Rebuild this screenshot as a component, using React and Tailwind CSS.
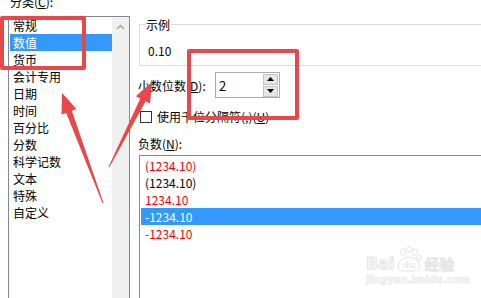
import React from "react";

const categories = ["常规", "数值", "货币", "会计专用", "日期", "时间", "百分比", "分数", "科学记数", "文本", "特殊", "自定义"];

const negatives = [
  { t: "(1234.10)", c: "text-[#ff0000]" },
  { t: "(1234.10)", c: "text-black" },
  { t: "1234.10", c: "text-[#ff0000]" },
  { t: "-1234.10", c: "text-white bg-[#3399ff]" },
  { t: "-1234.10", c: "text-[#ff0000]" },
];

export default function App() {
  return (
    <div className="relative w-[481px] h-[298px] overflow-hidden bg-white text-[12px] text-black font-['Noto_Sans_CJK_SC','Microsoft_YaHei',sans-serif]">
      <div className="flex h-full">
        {/* left column */}
        <div className="ml-[8px] w-[122px] shrink-0 flex flex-col">
          <div className="-mt-[6px] mb-[6px] h-[16px] leading-[16px] pl-[2px] whitespace-nowrap">
            分类(<span className="underline">C</span>):
          </div>
          <div className="flex flex-1 border-t border-l border-r border-[#828790]">
            <div className="flex-1 pl-[1px]">
              {categories.map((c, i) => (
                <div
                  key={c}
                  className={
                    "h-[17px] leading-[17px] pl-[3px] whitespace-nowrap " +
                    (i === 1 ? "bg-[#3399ff] text-white" : "")
                  }
                >
                  {c}
                </div>
              ))}
            </div>
            <div className="w-[17px] bg-[#f0f0f0] flex justify-center pt-[7px]">
              <svg width="9" height="6" viewBox="0 0 9 6">
                <path d="M1 5 L4.5 1.5 L8 5" fill="none" stroke="#a6a6a6" strokeWidth="1.5" />
              </svg>
            </div>
          </div>
        </div>

        {/* right column */}
        <div className="ml-[9px] flex-1 flex flex-col">
          <div className="relative mt-[24px] h-[42px] border-t border-l border-b border-[#dcdcdc] pl-[8px] pt-[17px]">
            <span className="absolute -top-[9px] left-[5px] bg-white px-[1px] h-[17px] leading-[17px]">示例</span>
            <div className="h-[17px] leading-[17px]">0.10</div>
          </div>

          <div className="mt-[6px] flex items-center h-[26px]">
            <div className="w-[77px] -ml-[1px] whitespace-nowrap leading-[17px]">
              小数位数(<span className="underline">D</span>):
            </div>
            <div className="w-[65px] h-[26px] border border-[#acacac] flex items-center justify-between">
              <span className="pl-[3px] leading-[17px] text-[13px]">2</span>
              <div className="flex flex-col gap-[1px] mr-[1px]">
                <div className="w-[15px] h-[11px] bg-[#e6e6e6] border border-[#c2c2c2] flex items-center justify-center">
                  <svg width="7" height="4" viewBox="0 0 7 4"><path d="M0 4 L3.5 0 L7 4 Z" fill="#000" /></svg>
                </div>
                <div className="w-[15px] h-[11px] bg-[#e6e6e6] border border-[#c2c2c2] flex items-center justify-center">
                  <svg width="7" height="4" viewBox="0 0 7 4"><path d="M0 0 L7 0 L3.5 4 Z" fill="#000" /></svg>
                </div>
              </div>
            </div>
          </div>

          <div className="mt-[13px] flex items-center h-[12px]">
            <div className="ml-[1px] w-[12px] h-[12px] border border-[#333333] bg-white" />
            <span className="ml-[5px] leading-[12px] whitespace-nowrap">
              使用千位分隔符(,)(<span className="underline">U</span>)
            </span>
          </div>

          <div className="mt-[12px] h-[17px] leading-[17px] -ml-[1px] whitespace-nowrap">
            负数(<span className="underline">N</span>):
          </div>

          <div className="mt-[3px] flex-1 border-t border-l border-[#828790] pl-[1px] pt-[1px]">
            {negatives.map((n, i) => (
              <div key={i} className={"h-[17px] leading-[17px] pl-[4px] " + n.c}>
                {n.t}
              </div>
            ))}
          </div>
        </div>
      </div>

      {/* annotations */}
      <div className="absolute left-0 top-[16px] w-[86px] h-[54px] border-[4px] border-[#e8484a] rounded-[2px]" />
      <div className="absolute left-[187px] top-[49px] w-[112px] h-[71px] border-[4px] border-[#e8484a] rounded-[2px]" />
      <svg className="absolute left-0 top-0 pointer-events-none" width="481" height="298" viewBox="0 0 481 298">
        <polygon
          points="62,93 76.5,109 71.8,110.7 103.5,203 102.5,203.2 66.2,112.9 61.5,114.6"
          fill="#e8484a"
        />
        <polygon
          points="152,82 150.1,103.4 145.7,101.2 109.4,167.2 108.6,166.8 140.3,98.4 135.9,96.2"
          fill="#e8484a"
        />
      </svg>

      {/* watermark */}
      <div className="absolute left-[366px] top-[246px] flex flex-col items-start opacity-90">
        <div className="flex items-end h-[26px]">
          <span className="text-[16px] leading-[16px] font-bold text-[#fafafa] font-['DejaVu_Sans',sans-serif] [-webkit-text-stroke:1px_#e2e2e2]">Bai</span>
          <svg width="28" height="26" viewBox="0 0 28 26" className="mx-[1px]">
            <ellipse cx="8" cy="6" rx="2.5" ry="3.2" fill="none" stroke="#e2e2e2" strokeWidth="1" />
            <ellipse cx="14" cy="3.5" rx="2.5" ry="3" fill="none" stroke="#e2e2e2" strokeWidth="1" />
            <ellipse cx="20" cy="6" rx="2.5" ry="3.2" fill="none" stroke="#e2e2e2" strokeWidth="1" />
            <ellipse cx="24" cy="12" rx="2.2" ry="2.8" fill="none" stroke="#e2e2e2" strokeWidth="1" />
            <path d="M3 22 Q3 12 14 11 Q25 12 25 22 Q25 25 14 25 Q3 25 3 22 Z" fill="none" stroke="#e2e2e2" strokeWidth="1" />
            <text x="14" y="22" textAnchor="middle" fontSize="9" fontWeight="bold" fill="#eaeaea" fontFamily="DejaVu Sans">du</text>
          </svg>
          <span className="text-[15px] leading-[16px] text-[#fafafa] [-webkit-text-stroke:1px_#e2e2e2]">经验</span>
        </div>
        <div className="mt-[2px] text-[10px] leading-[11px] font-bold text-[#fafafa] font-['DejaVu_Sans',sans-serif] [-webkit-text-stroke:0.6px_#e4e4e4]">
          jingyan.baidu.com
        </div>
      </div>
    </div>
  );
}
